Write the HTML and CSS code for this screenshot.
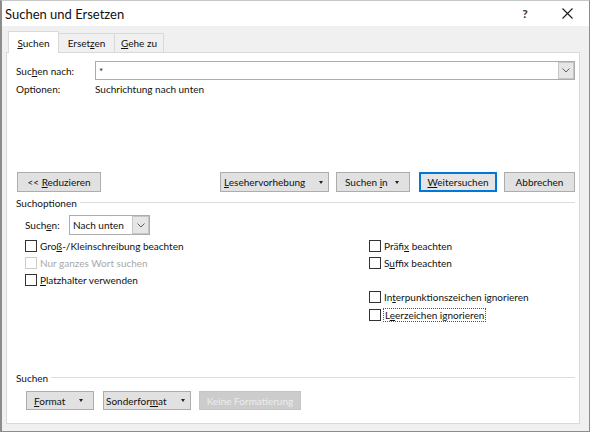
FILE: index.html
```html
<!DOCTYPE html>
<html lang="de">
<head>
<meta charset="utf-8">
<title>Suchen und Ersetzen</title>
<link rel="stylesheet" href="styles.css">
</head>
<body>
<div class="window">
  <div class="titlebar">
    <span class="title">Suchen und Ersetzen</span>
    <span class="tb-btn help">?</span>
    <span class="tb-btn close">
      <svg width="11" height="11" viewBox="0 0 11 11"><path d="M0.5 0.5 L10.5 10.5 M10.5 0.5 L0.5 10.5" stroke="#1a1a1a" stroke-width="1.1" fill="none"/></svg>
    </span>
  </div>
  <div class="client">
    <div class="tabs">
      <div class="tab active t1"><span><u>S</u>uchen</span></div>
      <div class="tab t2"><span>Erset<u>z</u>en</span></div>
      <div class="tab t3"><span><u>G</u>ehe zu</span></div>
    </div>
    <div class="panel">
      <div class="row find-row">
        <span class="lbl">Suc<u>h</u>en nach:</span>
        <div class="combo wide">
          <span class="combo-text">*</span>
          <span class="combo-arrow"><svg width="8" height="5" viewBox="0 0 8 5"><path d="M0.5 0.5 L4 4 L7.5 0.5" stroke="#606060" stroke-width="1" fill="none"/></svg></span>
        </div>
      </div>
      <div class="row opt-row">
        <span class="lbl">Optionen:</span>
        <span>Suchrichtung nach unten</span>
      </div>
      <div class="btn-row">
        <button class="btn reduce"><span>&lt;&lt; <u>R</u>eduzieren</span></button>
        <div class="spacer"></div>
        <button class="btn drop lese"><span><u>L</u>esehervorhebung</span><span class="tri"></span></button>
        <button class="btn drop suchin"><span>Suchen <u>i</u>n</span><span class="tri"></span></button>
        <button class="btn focus weiter"><span><u>W</u>eitersuchen</span></button>
        <button class="btn abbr"><span>Abbrechen</span></button>
      </div>
      <div class="group-head"><span>Suchoptionen</span><span class="line"></span></div>
      <div class="options">
        <div class="dir-row">
          <span class="dir-lbl">Such<u>e</u>n:</span>
          <div class="combo small">
            <span class="combo-text">Nach unten</span>
            <span class="combo-arrow"><svg width="8" height="5" viewBox="0 0 8 5"><path d="M0.5 0.5 L4 4 L7.5 0.5" stroke="#606060" stroke-width="1" fill="none"/></svg></span>
          </div>
        </div>
        <div class="cols">
          <div class="col left">
            <label class="cb"><span class="box"></span><span>Gro<u>ß</u>-/Kleinschreibung beachten</span></label>
            <label class="cb disabled"><span class="box"></span><span>Nur ganzes Wort suchen</span></label>
            <label class="cb"><span class="box"></span><span><u>P</u>latzhalter verwenden</span></label>
          </div>
          <div class="col right">
            <label class="cb"><span class="box"></span><span>Präfi<u>x</u> beachten</span></label>
            <label class="cb"><span class="box"></span><span>S<u>u</u>ffix beachten</span></label>
            <div class="cb-gap"></div>
            <label class="cb"><span class="box"></span><span>In<u>t</u>erpunktionszeichen ignorieren</span></label>
            <label class="cb last"><span class="box"></span><span class="focused">L<u>e</u>erzeichen ignorieren</span></label>
          </div>
        </div>
      </div>
      <div class="group-head bottom"><span>Suchen</span><span class="line"></span></div>
      <div class="fmt-row">
        <button class="btn drop fmt"><span><u>F</u>ormat</span><span class="tri"></span></button>
        <button class="btn drop sonder"><span>Sonderfor<u>m</u>at</span><span class="tri"></span></button>
        <button class="btn disabled keine"><span>Keine Formatierung</span></button>
      </div>
    </div>
  </div>
</div>
</body>
</html>
```
FILE: styles.css
```css
* { box-sizing: border-box; }
html, body { margin: 0; padding: 0; }
body {
  width: 590px;
  height: 432px;
  overflow: hidden;
  font-family: "Lato", "Noto Sans", sans-serif;
  font-size: 10px;
  line-height: 12px;
  color: #111;
  background: #fff;
  white-space: nowrap;
}
u { text-decoration: underline; text-underline-offset: 1px; }
.window {
  width: 590px;
  height: 432px;
  border: 1px solid #8c8c8c;
  border-left: 2px solid #8c8c8c;
  border-top-color: #c8c8c8;
  display: flex;
  flex-direction: column;
  background: #f0f0f0;
}
.titlebar {
  height: 25px;
  background: #fff;
  display: flex;
  align-items: center;
  padding-left: 3px;
}
.title { font-size: 13px; line-height: 16px; color: #111; flex: 1; }
.tb-btn { display: flex; justify-content: center; align-items: center; }
.help { width: 40px; font-size: 12px; font-weight: bold; color: #333; }
.close { width: 44px; }
.client {
  flex: 1;
  padding: 5px 9px 7px 4px;
  display: flex;
  flex-direction: column;
}
.tabs { display: flex; padding-left: 2px; height: 21px; align-items: flex-end; }
.tab {
  height: 19px;
  border: 1px solid #d9d9d9;
  border-bottom: none;
  display: flex;
  align-items: center;
  justify-content: center;
  background: #f0f0f0;
}
.tab.t1 { width: 51px; }
.tab.t2 { width: 57px; margin-left: -1px; }
.tab.t3 { width: 50px; margin-left: -1px; }
.tab.active {
  height: 22px;
  background: #fff;
  position: relative;
  z-index: 1;
  margin-bottom: -1px;
  padding-top: 1px;
}
.panel {
  flex: 1;
  background: #fff;
  border: 1px solid #d9d9d9;
  padding: 8px 4px 0 9px;
  display: flex;
  flex-direction: column;
}
.row { display: flex; align-items: center; }
.lbl { width: 79px; }
.combo {
  height: 19px;
  border: 1px solid #acacac;
  display: flex;
  align-items: center;
  background: #fff;
}
.combo.wide { flex: 1; }
.combo-text { flex: 1; padding-left: 3px; }
.combo-arrow {
  width: 16px;
  height: 17px;
  background: #e6e6e6;
  border: 1px solid #c6c6c6;
  display: flex;
  align-items: center;
  justify-content: center;
}
.opt-row { margin-top: 2px; height: 14px; }
.btn-row {
  display: flex;
  margin-top: 76px;
  height: 20px;
}
.spacer { flex: 1; }
.btn {
  font: inherit;
  color: #111;
  background: #e1e1e1;
  border: 1px solid #adadad;
  height: 20px;
  padding: 0;
  display: flex;
  align-items: center;
  justify-content: center;
}
.btn.drop { justify-content: space-between; }
.tri {
  width: 0; height: 0;
  border-left: 2.5px solid transparent;
  border-right: 2.5px solid transparent;
  border-top: 3px solid #222;
}
.reduce { width: 84px; margin-left: 1px; }
.lese { width: 109px; padding: 0 5px 0 3px; }
.suchin { width: 74px; margin-left: 7px; padding: 0 10px 0 8px; }
.weiter { width: 78px; margin-left: 9px; }
.btn.focus { border: 2px solid #0078d7; background: #e5e5e5; }
.abbr { width: 71px; margin-left: 7px; }
.group-head {
  display: flex;
  align-items: center;
  margin-top: 4px;
  height: 14px;
}
.group-head .line { flex: 1; height: 1px; background: #dcdcdc; margin-left: 3px; margin-top: -2px; }
.options { padding-left: 9px; }
.dir-row { display: flex; align-items: center; margin-top: 5px; height: 20px; }
.dir-lbl { width: 44px; }
.combo.small { width: 81px; height: 20px; }
.combo.small .combo-arrow { height: 18px; width: 17px; }
.cols { display: flex; margin-top: 2px; }
.col.left { width: 344px; }
.col { display: flex; flex-direction: column; }
.cb { display: flex; align-items: center; height: 17px; }
.cb.last { height: 18px; padding-top: 1px; }
.box {
  width: 12px; height: 12px;
  border: 1px solid #333;
  background: #fff;
  margin-right: 3px;
}
.cb.disabled { color: #a8a8a8; }
.cb.disabled .box { border-color: #cccccc; }
.cb-gap { height: 17px; }
.focused { outline: 1px dotted #555; outline-offset: 0; padding: 0 1px; }
.group-head.bottom { margin-top: auto; }
.fmt-row { display: flex; padding-left: 10px; margin-top: 6px; margin-bottom: 13px; }
.fmt-row .btn { height: 19px; }
.fmt { width: 68px; padding: 0 10px 0 7px; }
.sonder { width: 88px; margin-left: 9px; padding: 0 5px 0 2px; }
.keine { width: 102px; margin-left: 8px; background: #cccccc; border-color: #c4c4c4; color: #ededed; }
```
